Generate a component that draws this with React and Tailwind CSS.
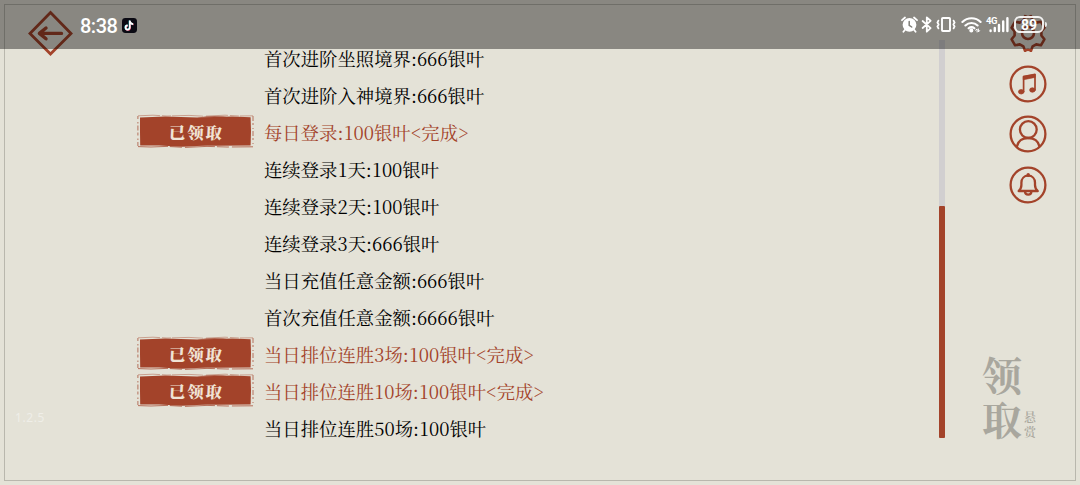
const tasks = [
  { id: 1, text: '首次进阶坐照境界:666银叶' },
  { id: 2, text: '首次进阶入神境界:666银叶' },
  { id: 3, text: '每日登录:100银叶<完成>', done: true },
  { id: 4, text: '连续登录1天:100银叶' },
  { id: 5, text: '连续登录2天:100银叶' },
  { id: 6, text: '连续登录3天:666银叶' },
  { id: 7, text: '当日充值任意金额:666银叶' },
  { id: 8, text: '首次充值任意金额:6666银叶' },
  { id: 9, text: '当日排位连胜3场:100银叶<完成>', done: true },
  { id: 10, text: '当日排位连胜10场:100银叶<完成>', done: true },
  { id: 11, text: '当日排位连胜50场:100银叶' },
];

// The "1" is narrower than the other digits, so pad it to the same width
function TaskText({ text }) {
  return text.split(/(1)/).filter(Boolean).map((part, i) => (
    <span key={i} className={part === '1' ? 'px-[0.7px]' : ''}>{part}</span>
  ));
}

function Stamp() {
  return (
    <div className="relative w-[117px] h-[34px] flex items-center justify-center">
      <svg className="absolute left-0 -top-px" width="117" height="34" viewBox="0 0 117 34" fill="none">
        <path d="M3 3.4 L28 2.6 L60 3.4 L95 2.6 L113.6 3.2 L114 17 L113.6 31.4 L80 31.8 L45 31.4 L3.2 31.4 L3 18Z" fill="#a3432a" />
        <path d="M1 1.8 L16 1.2 L30 2 L52 1.4 L66 2.2 L88 1.2 L102 2 L116 1.8" stroke="#a3432a" strokeWidth="0.7" strokeDasharray="22 2 9 1 31 3" opacity="0.6" />
        <path d="M1 32.6 L14 33 L30 32.4 L48 33.4 L70 32.4 L90 33 L116 32.8" stroke="#a3432a" strokeWidth="0.9" strokeDasharray="30 2 12 3" opacity="0.8" />
        <path d="M0.9 2 V32" stroke="#a3432a" strokeWidth="1" strokeDasharray="3 3 1.5 2 5 2" opacity="0.7" />
        <path d="M116 2 V32" stroke="#a3432a" strokeWidth="1" strokeDasharray="5 2 2 3 1 2" opacity="0.7" />
        <path d="M22 31 Q45 34.6 70 31Z M60 3.4 Q78 1 94 3.4Z" fill="#a3432a" />
      </svg>
      <span className="relative text-[16.5px] leading-none font-black tracking-[1.8px] text-[#f0e3d5] -skew-x-3 pl-px pt-0.5">已领取</span>
    </div>
  );
}

function TaskRow({ task }) {
  return (
    <li className="flex items-center h-[37px] shrink-0">
      <div className="w-[127px] shrink-0">{task.done && <Stamp />}</div>
      <p className={task.done ? 'text-[#a3432a] whitespace-nowrap pt-px' : 'text-black whitespace-nowrap pt-px'}>
        <TaskText text={task.text} />
      </p>
    </li>
  );
}

function RoundIcon({ children }) {
  return (
    <svg width="38" height="38" viewBox="0 0 38 38" fill="none" stroke="#a3432a" strokeWidth="2.3" strokeLinecap="round" strokeLinejoin="round">
      <circle cx="19" cy="19" r="17.4" />
      {children}
    </svg>
  );
}

function SideMenu() {
  return (
    <nav className="flex flex-col items-center gap-[12.6px]">
      <svg width="38" height="38" viewBox="0 0 38 38" fill="none" stroke="#a3432a" strokeWidth="2.6" strokeLinejoin="round">
        <path d="M16 2.2q3 2 6 0l1.6 4.4 3.6 2 4.7-.9 3.5 6-3 3.8v4l3 3.8-3.5 6-4.7-.9-3.6 2-1.6 4.4q-3-2-6 0l-1.6-4.4-3.6-2-4.7.9-3.5-6 3-3.8v-4l-3-3.8 3.5-6 4.7.9 3.6-2z" />
        <circle cx="19" cy="19" r="6" />
      </svg>
      <RoundIcon>
        <path d="M14.6 26.5V11.7l11.4-2.2v15.2" strokeWidth="1.7" />
        <path d="M14.6 11.2l11.6-2.3v3.5l-11.6 2.3z" fill="#a3432a" strokeWidth="0.6" />
        <ellipse cx="12.2" cy="26.8" rx="2.7" ry="2.2" fill="#a3432a" strokeWidth="0.8" />
        <ellipse cx="23.4" cy="25" rx="2.7" ry="2.2" fill="#a3432a" strokeWidth="0.8" />
      </RoundIcon>
      <RoundIcon>
        <circle cx="19.3" cy="14.6" r="8.4" />
        <path d="M8 31.2c1-4.9 5.2-8.2 11.2-8.2s10.2 3.3 11.2 8.2" />
      </RoundIcon>
      <RoundIcon>
        <path d="M9.6 25c2.1-1.8 2.8-3.3 2.8-6v-2.3c0-4 2.8-7 6.8-7s6.8 3 6.8 7V19c0 2.7.7 4.2 2.8 6z" />
        <path d="M19.2 9.2V8.6" strokeWidth="3.4" />
        <path d="M16 25.4c.2 4.4 6.2 4.4 6.4 0" />
      </RoundIcon>
    </nav>
  );
}

function StatusBar() {
  return (
    <header className="absolute inset-x-0 top-0 h-[49px] bg-black/40 text-white font-[Roboto,sans-serif] flex items-start pl-20 pr-[33px]">
      <span className="text-[20px] leading-none font-medium mt-4 w-[42px] tracking-[-0.5px]">8:38</span>
      <svg className="mt-[17.5px]" width="15" height="15" viewBox="0 0 15 15" fill="none">
        <rect width="15" height="15" rx="3.4" fill="#0b0a13" />
        <path d="M7.8 2.6v6.9a2.1 2.1 0 1 1-2.1-2.1M7.8 3.2c.3 1.7 1.5 2.8 3.4 2.9" stroke="#e8456b" strokeWidth="1.5" transform="translate(.4 .4)" />
        <path d="M7.8 2.6v6.9a2.1 2.1 0 1 1-2.1-2.1M7.8 3.2c.3 1.7 1.5 2.8 3.4 2.9" stroke="#45dfe2" strokeWidth="1.5" transform="translate(-.4 -.2)" />
        <path d="M7.8 2.6v6.9a2.1 2.1 0 1 1-2.1-2.1M7.8 3.2c.3 1.7 1.5 2.8 3.4 2.9" stroke="#fff" strokeWidth="1.6" />
      </svg>

      <div className="ml-auto flex items-center h-[17px] mt-4">
        <svg width="17" height="17" viewBox="0 0 17 17" fill="none" stroke="#fff" strokeWidth="1.8" strokeLinecap="round">
          <circle cx="8.5" cy="8.8" r="6" fill="#fff" />
          <path d="M8.2 5.5v3.8l2.5 1.7" stroke="#7f7e78" strokeWidth="1.5" />
          <path d="M1 4.2L4 1.5M16 4.2l-3-2.7M3.8 14l-1.4 1.8M13.2 14l1.4 1.8" />
        </svg>
        <svg className="ml-[3px]" width="12" height="17" viewBox="0 0 12 17" fill="none" stroke="#fff" strokeWidth="1.8" strokeLinejoin="round" strokeLinecap="round">
          <path d="M1.6 5l8 7.2-3.8 3.5V1.5l3.8 3.3-8 7.2" />
        </svg>
        <svg className="ml-[3px]" width="20" height="17" viewBox="0 0 20 17" fill="none" stroke="#fff" strokeWidth="1.9" strokeLinecap="round" strokeLinejoin="round">
          <rect x="6" y="2" width="8" height="13" rx="0.8" />
          <path d="M2.4 4.6l-1 2 1.2 1.9-1.2 1.9 1 2M17.6 4.6l1 2-1.2 1.9 1.2 1.9-1 2" strokeWidth="1.8" />
        </svg>
        <svg className="ml-[5px]" width="21" height="17" viewBox="0 0 21 17" fill="none" stroke="#fff" strokeWidth="2.1" strokeLinecap="round">
          <path d="M1.4 6c5.2-5 13.2-5 18.2 0M4.4 9.5c3.4-3.3 8.8-3.3 12.2 0M7.6 12.3c1.7-1.4 4.1-1.4 5.8 0" />
          <circle cx="10.3" cy="14.4" r="1" fill="#fff" />
          <path d="M14.6 14.2l1.5-1.2v3M18.6 14.6L17.4 16v-3" strokeWidth="1" />
        </svg>
        <div className="ml-1 relative w-6 h-[17px]">
          <span className="absolute left-0 top-0 text-[9.5px] leading-none font-bold tracking-[-0.4px]">4G</span>
          <svg width="24" height="17" viewBox="0 0 24 17" stroke="#fff" strokeWidth="2.4" strokeLinecap="round">
            <path d="M4.6 14.5v.5M8.8 12v3M13 9v6M17.2 5.5V15M21.4 2.2V15" />
          </svg>
        </div>
        <div className="ml-1 w-[30px] h-[17px] rounded-[6px] border-2 border-white/90 flex items-center justify-center text-[14px] leading-none font-bold pt-px">
          89
        </div>
        <div className="ml-px w-[2px] h-[5px] rounded-r bg-white/80" />
      </div>
    </header>
  );
}

export default function App() {
  return (
    <div className="relative w-[1080px] h-[485px] overflow-hidden bg-[#e4e2d7] p-1 font-['Noto_Serif_CJK_SC','Noto_Sans_CJK_SC',serif]">
      <div className="flex w-[1072px] h-[477px] border border-[#b9b7ad]">
        <aside className="w-[132px] shrink-0 flex flex-col justify-between pb-[56px] pl-[10px]">
          <button className="ml-3 mt-[5px] w-[46px] h-[46px]">
            <svg width="46" height="46" viewBox="0 0 46 46" fill="none" stroke="#a3432a" strokeWidth="2.8">
              <path d="M23.5 2.6L44 23.4 23.5 44 3 23.4z" />
              <path d="M34.5 23.4H13M19 18L12.4 23.4l6.6 5.4" strokeWidth="3.4" strokeLinecap="round" strokeLinejoin="round" />
            </svg>
          </button>
          <span className="text-[12px] leading-none tracking-[0.6px] text-[#efeee8] font-['Noto_Sans',sans-serif]">1.2.5</span>
        </aside>

        <ul className="w-[802px] mt-[34px] text-[18.36px] leading-none">
          {tasks.map(task => (
            <TaskRow key={task.id} task={task} />
          ))}
        </ul>

        <div className="mt-[35px] w-[6px] h-[398px] bg-[#d1cfd0] flex flex-col justify-end">
          <div className="h-[232px] rounded-[1px] bg-[#a3432a]" />
        </div>

        <aside className="flex-1 flex flex-col justify-between pb-[40px] pt-[9px] pl-[37px]">
          <div className="flex justify-end pr-7">
            <SideMenu />
          </div>
          <div className="flex items-end text-[#a9a79e]">
            <div className="flex flex-col gap-[4px] w-[42px] text-[40px] leading-[40px] font-bold pb-[2px]">
              <span>领</span>
              <span>取</span>
            </div>
            <div className="flex flex-col gap-[3px] text-[12px] leading-[12px] font-semibold pb-0.5">
              <span>悬</span>
              <span>赏</span>
            </div>
          </div>
        </aside>
      </div>
      <StatusBar />
    </div>
  );
}
